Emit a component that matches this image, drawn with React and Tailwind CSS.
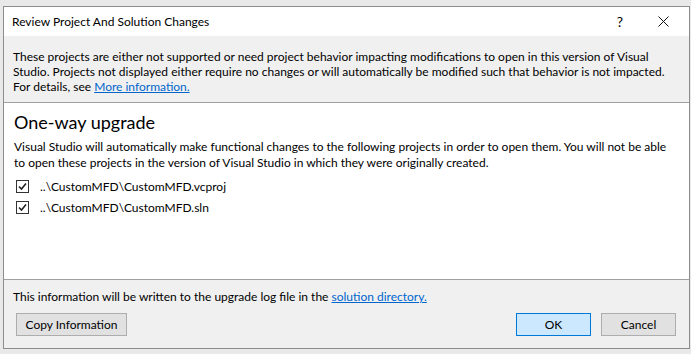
import React, { useState } from "react";

const font = { fontFamily: '"Segoe UI", Lato, "Noto Sans", sans-serif' };

const Check = ({ checked, onChange }) => (
  <button
    onClick={onChange}
    className="w-[13px] h-[13px] border border-[#333333] bg-white flex items-center justify-center shrink-0"
  >
    {checked && (
      <svg width="9" height="9" viewBox="0 0 9 9">
        <path d="M1 4.5 L3.5 7 L8 1.5" fill="none" stroke="#222" strokeWidth="1.6" />
      </svg>
    )}
  </button>
);

const App = () => {
  const [items, setItems] = useState([
    { path: "..\\CustomMFD\\CustomMFD.vcproj", on: true },
    { path: "..\\CustomMFD\\CustomMFD.sln", on: true },
  ]);

  const toggle = (i) =>
    setItems(items.map((it, j) => (j === i ? { ...it, on: !it.on } : it)));

  return (
    <div className="w-[691px] h-[354px] bg-[#e9e9e9] pt-[6px] pl-[3px] pr-[1px] pb-[5px]" style={font}>
      <div className="h-full border border-[#8c8c8c] bg-white flex flex-col text-[12px] text-black">
        {/* title bar */}
        <div className="h-[29px] flex items-center pl-[8px] shrink-0">
          <span className="flex-1">Review Project And Solution Changes</span>
          <span className="w-[46px] text-center text-[14px]">?</span>
          <span className="w-[46px] flex justify-center pr-[5px]">
            <svg width="11" height="11" viewBox="0 0 11 11">
              <path d="M0.5 0.5 L10.5 10.5 M10.5 0.5 L0.5 10.5" stroke="#111" strokeWidth="1" />
            </svg>
          </span>
        </div>

        {/* info band */}
        <div className="h-[67px] bg-[#f0f0f0] border-b border-[#a0a0a0] px-[9px] pt-[13px] leading-[15px] shrink-0 whitespace-nowrap">
          <div>These projects are either not supported or need project behavior impacting modifications to open in this version of Visual</div>
          <div>Studio. Projects not displayed either require no changes or will automatically be modified such that behavior is not impacted.</div>
          <div>
            For details, see <span className="text-[#0066cc] underline">More information.</span>
          </div>
        </div>

        {/* content */}
        <div className="flex-1 px-[10px] pt-[7px]">
          <div className="text-[18px] leading-[24px]">One-way upgrade</div>
          <div className="leading-[16px] mt-[5px] whitespace-nowrap">
            <div>Visual Studio will automatically make functional changes to the following projects in order to open them. You will not be able</div>
            <div>to open these projects in the version of Visual Studio in which they were originally created.</div>
          </div>
          <div className="mt-[9px] flex flex-col gap-[8px] pl-[2px]">
            {items.map((it, i) => (
              <div key={it.path} className="flex items-center gap-[11px] h-[13px]">
                <Check checked={it.on} onChange={() => toggle(i)} />
                <span>{it.path}</span>
              </div>
            ))}
          </div>
        </div>

        {/* footer */}
        <div className="h-[69px] bg-[#f0f0f0] border-t border-[#a0a0a0] px-[9px] pt-[9px] shrink-0">
          <div className="leading-[16px]">
            This information will be written to the upgrade log file in the{" "}
            <span className="text-[#0066cc] underline">solution directory.</span>
          </div>
          <div className="flex items-center mt-[8px] pl-[3px] pr-[4px]">
            <button className="h-[23px] w-[111px] bg-[#e1e1e1] border border-[#adadad]">Copy Information</button>
            <div className="flex-1" />
            <button className="h-[23px] w-[75px] bg-[#cce8ff] border border-[#0078d7]">OK</button>
            <button className="h-[23px] w-[75px] ml-[10px] bg-[#e1e1e1] border border-[#adadad]">Cancel</button>
          </div>
        </div>
      </div>
    </div>
  );
};

export default App;
